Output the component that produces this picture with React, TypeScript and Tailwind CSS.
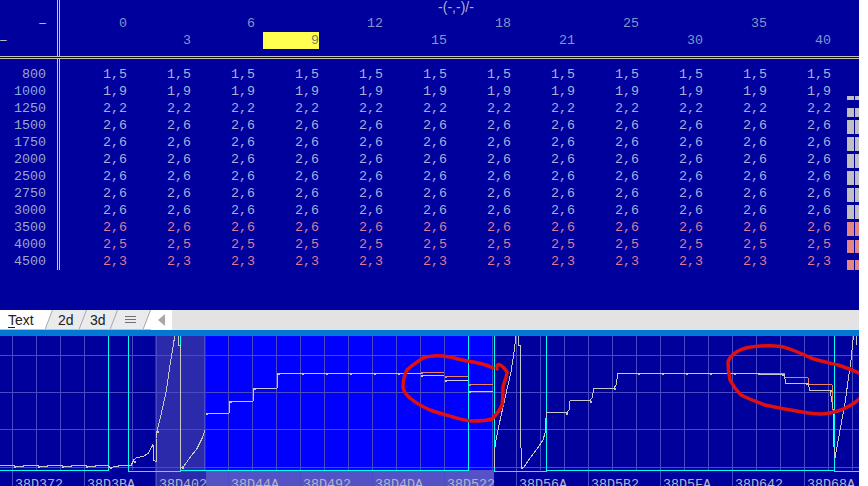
const font = { fontFamily: '"Liberation Mono", monospace' };
const sans = { fontFamily: '"Liberation Sans", sans-serif' };

const columns = [
  { label: "0", low: false },
  { label: "3", low: true },
  { label: "6", low: false },
  { label: "9", low: true, active: true },
  { label: "12", low: false },
  { label: "15", low: true },
  { label: "18", low: false },
  { label: "21", low: true },
  { label: "25", low: false },
  { label: "30", low: true },
  { label: "35", low: false },
  { label: "40", low: true },
];

const rows = [
  { rpm: "800", value: "1,5", bar: 0 },
  { rpm: "1000", value: "1,9", bar: 4 },
  { rpm: "1250", value: "2,2", bar: 9 },
  { rpm: "1500", value: "2,6", bar: 14 },
  { rpm: "1750", value: "2,6", bar: 14 },
  { rpm: "2000", value: "2,6", bar: 14 },
  { rpm: "2500", value: "2,6", bar: 14 },
  { rpm: "2750", value: "2,6", bar: 14 },
  { rpm: "3000", value: "2,6", bar: 14 },
  { rpm: "3500", value: "2,6", bar: 14, hot: true },
  { rpm: "4000", value: "2,5", bar: 13, hot: true },
  { rpm: "4500", value: "2,3", bar: 10, hot: true },
];

const addresses = ["38D372", "38D3BA", "38D402", "38D44A", "38D492", "38D4DA", "38D522", "38D56A", "38D5B2", "38D5FA", "38D642", "38D68A"];

const gridX = Array.from({ length: 36 }, (_, i) => 12 + i * 24);
const gridY = [355, 392, 429, 467];
const tickX = Array.from({ length: 12 }, (_, i) => 12 + i * 72);

const baseline =
  "0,465.5 14,465.5 14,466.5 23,466.5 23,465.5 38,465.5 38,466.5 47,466.5 47,465.5 62,465.5 62,466.5 71,466.5 71,465.5 86,465.5 86,466.5 95,466.5 95,465.5 108,465.5 110,467.5 117,466.5 120,465.5 128,465.5 131,465.5 134,459.5 137,457.5 143,456.5 148,453.5 152,446.5 153,444.5 154,460.5 156,461.5 156,438.5 157,431.5 162,410.5 166,392.5 170,365.5 174,340.5 175,336";
const wave1b = "178.5,336 178.5,345 180.5,345 180.5,425 181,468 184,466 190,457.5 197,448.5 202,438.5 205,430.5";
const stepsA = "206,413.5 229,413.5 230,401.5 253,401.5 254,388.5 277,388.5 278,373.5 421,373.5";
const grayA = "421,375.5 444,375.5 M445,380.5 468,380.5 M469,391.5 493,391.5";
const wave2 = "494,468 494,455 496,440 499,425 505,398 511,372 514,352 516,336";
const wave2b = "518.5,336 518.5,345 520.5,345 520.5,427 521.5,467 524,467 530,458 537,449 543,440 545,433 546,418 546.5,412.5 567,412.5 569,410 570,401 590,400.5 592,398 594,388 614,388 616,385 618,373.5 760,373.5";
const gray2 = "760,373.5 760,374.5 784,374.5 786,383.5 808,383.5 810,390.5 830,390.5 833,408 834,447 835,458 845,403 851,360 853,340 853,336";
const orange2 = "760,373.5 784,373.5 785,377.5 808,377.5 809,384.5 832,384.5 833,410";
const wave3b = "856.5,336 856.5,345";

const markers = [
  [14, 466], [38, 466], [62, 466], [86, 466], [110, 467], [134, 461], [157, 431], [182, 467],
  [206, 413], [230, 401], [254, 388], [278, 373], [302, 373], [326, 373], [350, 373], [374, 373], [398, 373],
  [421, 375], [445, 380], [469, 391], [521, 467], [566, 413], [590, 401], [614, 388], [638, 373], [662, 373],
  [686, 373], [710, 373], [734, 373], [758, 373], [782, 374], [806, 383], [830, 390],
];
const redMarkers = [[421, 372], [445, 376], [469, 384]];

const loopA =
  "M493 368 C485 364 475 362 467 361 C460 360 455 358 450 357 C444 356 438 355 433 356 C428 356 426 357 423 358 C417 362 411 366 407 370 C404 376 403 381 403 387 C404 392 406 395 410 398 C416 403 423 407 430 410 C438 413 446 415 453 417 C460 419 466 421 473 421 C480 421 486 421 492 419 C497 414 500 410 502 405 C503 400 503 393 503 387 C504 382 507 377 507 372 C505 369 503 366 500 365 C498 364 496 365 497 369";
const loopB =
  "M870 380 C866 375 850 369 838 365 C830 363 820 361 811 358 C805 355 800 353 795 351 C788 348 782 346 775 346 C767 345 759 346 751 347 C745 348 739 350 735 353 C731 356 729 359 728 362 C728 369 729 375 730 380 C733 386 737 391 741 395 C749 399 757 402 765 405 C774 407 783 409 791 410 C801 412 811 414 821 414 C829 414 835 412 841 410 C848 407 854 404 858 400 C863 396 868 390 870 380";

function TabSlant({ left, right }: { left: string; right: string }) {
  return (
    <svg width="8" height="20" viewBox="0 0 8 20" className="shrink-0">
      <polygon points="0,0 8,0 0,20" fill={left} />
      <polygon points="8,0 8,20 0,20" fill={right} />
      <line x1="7.5" y1="0" x2="0" y2="19.5" stroke="#a8a8a8" />
      <line x1="0" y1="19.5" x2="8" y2="19.5" stroke="#c0c0c0" />
    </svg>
  );
}

function Chart() {
  return (
    <div className="relative h-[150px] overflow-hidden bg-[#00009c]">
      <svg width="859" height="150" viewBox="0 336 859 150" className="absolute inset-0" shapeRendering="crispEdges">
        <rect x="155" y="336" width="51" height="150" fill="#2a2aaa" />
        <rect x="206" y="336" width="288" height="134" fill="#0000ff" />
        <rect x="206" y="470" width="288" height="16" fill="#5353c6" />
        {gridX.map((x) => (
          <line key={x} x1={x + 0.5} y1="336" x2={x + 0.5} y2="470" stroke="#4a4ac4" />
        ))}
        {gridY.map((y) => (
          <line key={y} x1="0" y1={y + 0.5} x2="859" y2={y + 0.5} stroke="#4a4ac4" />
        ))}
        {tickX.map((x) => (
          <line key={x} x1={x + 0.5} y1="470" x2={x + 0.5} y2="486" stroke="#4a4ac4" />
        ))}
        <polyline points="0,470.5 108.5,470.5 108.5,336" fill="none" stroke="#00ffff" />
        <polyline points="128.5,336 128.5,471.5 180.5,471.5 180.5,336" fill="none" stroke="#00ffff" />
        <polyline points="180,470.5 468.5,470.5 468.5,336" fill="none" stroke="#00ffff" />
        <polyline points="494.5,336 494.5,471.5 546.5,471.5 546.5,336" fill="none" stroke="#00ffff" />
        <polyline points="546,470.5 834.5,470.5 834.5,336" fill="none" stroke="#00ffff" />
        <line x1="834" y1="471.5" x2="859" y2="471.5" stroke="#00ffff" />
        <polyline points={baseline} fill="none" stroke="#c8c8c8" />
        <polyline points={wave1b} fill="none" stroke="#c8c8c8" />
        <polyline points={stepsA} fill="none" stroke="#c8c8c8" />
        <path d="M421 372.5H444M445 376.5H468M469 384.5H493" fill="none" stroke="#f08060" />
        <path d={`M${grayA}`} fill="none" stroke="#d0d0d0" />
        <polyline points={wave2} fill="none" stroke="#c8c8c8" />
        <polyline points={wave2b} fill="none" stroke="#c8c8c8" />
        <polyline points={orange2} fill="none" stroke="#f08060" />
        <polyline points={gray2} fill="none" stroke="#c8c8c8" />
        <polyline points={wave3b} fill="none" stroke="#c8c8c8" />
        {markers.map(([x, y]) => (
          <rect key={`${x}-${y}`} x={x} y={y} width="2" height="2" fill="#c8c8c8" />
        ))}
        {redMarkers.map(([x, y]) => (
          <rect key={`${x}-${y}`} x={x} y={y} width="2" height="2" fill="#f08060" />
        ))}
        <path d={loopA} fill="none" stroke="#e01010" strokeWidth="3.5" strokeLinecap="round" shapeRendering="auto" />
        <path d={loopB} fill="none" stroke="#e01010" strokeWidth="3.5" strokeLinecap="round" shapeRendering="auto" />
      </svg>
      <div className="absolute bottom-0 left-0 flex h-[16px] pl-[15px] text-[13.33px] leading-[16px] text-[#b4b4cc]" style={font}>
        {addresses.map((a) => (
          <span key={a} className="relative top-[7px] w-[72px] shrink-0">
            {a}
          </span>
        ))}
      </div>
    </div>
  );
}

export default function App() {
  return (
    <div className="h-[486px] w-[868px] overflow-hidden bg-white">
      <div className="w-[859px]">
        <div className="h-[310px] bg-[#00009c] text-[13.33px] text-[#c0c0c0]" style={font}>
          <div className="flex h-[59px] border-b-[3px] border-double border-[#c8c4b4]">
            <div className="w-[60px] shrink-0 border-r-[3px] border-double border-[#c8c8c8] pt-[15px] text-[12px] leading-[17px] text-[#c4c4d4]" style={sans}>
              <div className="pr-[11px] text-right">–</div>
              <div>–</div>
            </div>
            <div className="flex-1">
              <div className="h-[15px] w-[792px] text-center text-[14px] leading-[15px] text-[#a8b4d8]" style={sans}>
                -(-,-)/-
              </div>
              <div className="flex leading-[17px] text-[#8096cc]">
                {columns.map((c, i) => (
                  <div key={c.label} className={i === 0 ? "h-[34px] w-[67px]" : "h-[34px] w-[64px]"}>
                    {c.low ? (
                      <div className={c.active ? "ml-auto mt-[17px] h-[17px] w-[56px] bg-[#ffff50] text-right text-[#807a60]" : "mt-[17px] text-right"}>
                        {c.label}
                      </div>
                    ) : (
                      <div className="text-right">{c.label}</div>
                    )}
                  </div>
                ))}
              </div>
            </div>
          </div>
          <div className="flex">
            <div className="h-[211px] w-[60px] shrink-0 border-r-[3px] border-double border-[#c8c8c8] pr-[11px] pt-[7px] text-right leading-[17px] text-[#98a8cc]">
              {rows.map((r) => (
                <div key={r.rpm} className={r.rpm === "1000" ? "text-[#84a8ec]" : ""}>
                  {r.rpm}
                </div>
              ))}
            </div>
            <div className="flex-1 pt-[7px] leading-[17px]">
              {rows.map((r) => (
                <div key={r.rpm} className={r.hot ? "flex h-[17px] text-[#dc7c98]" : "flex h-[17px] text-[#a4b2d8]"}>
                  {columns.map((c, i) => (
                    <div key={c.label} className={i === 0 ? "w-[67px] text-right" : "w-[64px] text-right"}>
                      {r.value}
                    </div>
                  ))}
                  <div className="ml-[16px] flex items-end gap-[1px]">
                    <div className={r.hot ? "w-[7px] bg-[#e38585]" : "w-[7px] bg-[#c0c0c0]"} style={{ height: r.bar }} />
                    <div className={r.hot ? "w-[4px] bg-[#e38585]" : "w-[4px] bg-[#c0c0c0]"} style={{ height: r.bar }} />
                  </div>
                </div>
              ))}
            </div>
          </div>
        </div>

        <div className="flex h-[20px] items-stretch bg-[#e3e3e3] text-[14px] leading-[20px] text-[#222]" style={sans}>
          <div className="w-[45px] border-b border-[#c0c0c0] bg-white pl-[8px]">
            <span className="underline underline-offset-2 decoration-1">T</span>ext
          </div>
          <TabSlant left="#ffffff" right="#e9ebed" />
          <div className="w-[26px] border-b border-[#c0c0c0] bg-[#e9ebed] pl-[5px]">2d</div>
          <TabSlant left="#e9ebed" right="#e9ebed" />
          <div className="w-[23px] border-b border-[#c0c0c0] bg-[#e9ebed] pl-[3px]">3d</div>
          <TabSlant left="#e9ebed" right="#e9ebed" />
          <div className="flex w-[25px] items-center justify-center border-b border-[#c0c0c0] bg-[#e9ebed]">
            <svg width="11" height="10" viewBox="0 0 11 10" shapeRendering="crispEdges">
              <path d="M0 1.5H11M0 4.5H11M0 7.5H11" stroke="#707070" />
            </svg>
          </div>
          <TabSlant left="#e9ebed" right="#ffffff" />
          <div className="flex w-[21px] items-center justify-center bg-white">
            <svg width="7" height="12" viewBox="0 0 7 12">
              <polygon points="7,0 7,12 0,6" fill="#a8a8a8" />
            </svg>
          </div>
        </div>

        <div className="h-[6px] bg-[#0078d4]" />
        <Chart />
      </div>
    </div>
  );
}
